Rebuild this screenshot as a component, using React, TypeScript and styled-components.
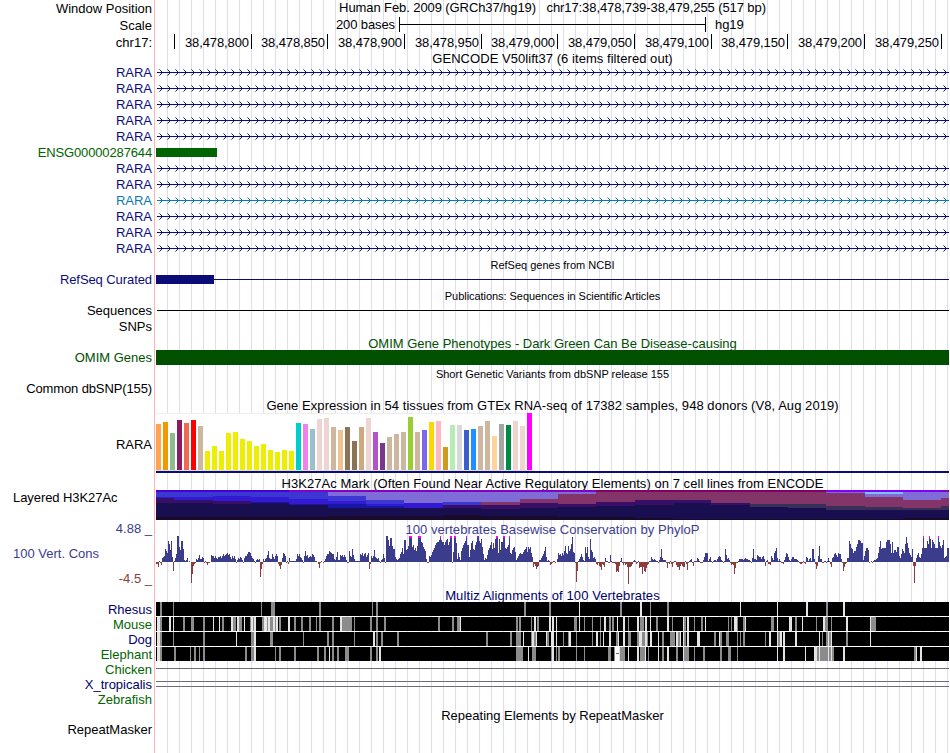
import React from 'react';
import styled, {createGlobalStyle} from 'styled-components';

const GlobalStyle = createGlobalStyle`
  body {
    margin: 0;
    background: #fff;
  }
`;

const Browser = styled.div`
  width: 949px;
  height: 753px;
  overflow: hidden;
  font-family: "Liberation Sans", Arial, Helvetica, sans-serif;
  font-size: 13px;
  color: #000;
  background:
    linear-gradient(#ffb4b4, #ffb4b4) 154px 0 / 1px 100% no-repeat,
    repeating-linear-gradient(90deg, #dcdcff 0 1px, transparent 1px 12px) 167px 0 / 782px 100% no-repeat;
`;

const Row = styled.div<{h: number}>`
  display: flex;
  height: ${p => p.h}px;
  line-height: ${p => p.h}px;
  white-space: pre;
`;

const Label = styled.div<{color?: string; $shift?: number; $spacing?: number}>`
  flex: none;
  width: 152px;
  margin-top: ${p => p.$shift || 0}px;
  margin-right: 4px;
  text-align: right;
  color: ${p => p.color || '#000'};
  letter-spacing: ${p => p.$spacing || 0}px;
`;

const LeftLabel = styled(Label)`
  box-sizing: border-box;
  padding-left: 13px;
  text-align: left;
`;

const Track = styled.div`
  flex: none;
  width: 793px;
  svg {
    display: block;
  }
`;

const Title = styled(Track)<{color?: string; $small?: boolean; $shift?: number; $spacing?: number}>`
  margin-top: ${p => p.$shift || 0}px;
  text-align: center;
  color: ${p => p.color || '#000'};
  font-size: ${p => p.$small ? 11 : 13}px;
  letter-spacing: ${p => p.$spacing || 0}px;
`;

const ScaleTrack = styled(Track)`
  display: flex;
  letter-spacing: -0.1px;
`;

const ScaleText = styled.span<{w?: number}>`
  width: ${p => p.w ? p.w + 'px' : 'auto'};
  margin-top: -1px;
  text-align: right;
`;

const ScaleBar = styled.div`
  display: flex;
  align-items: center;
  box-sizing: border-box;
  width: 307px;
  height: 15px;
  margin: 0 9px 0 4px;
  border: solid #000;
  border-width: 0 1px;
  &::before {
    content: '';
    flex: 1;
    height: 1px;
    background: #000;
  }
`;

const Tick = styled.span<{w: number}>`
  box-sizing: border-box;
  flex: none;
  width: ${p => p.w}px;
  height: 15px;
  padding-right: 2px;
  border-right: 1px solid #000;
  text-align: right;
`;

const Bar = styled.div<{w: number; h: number; top?: number; color: string}>`
  width: ${p => p.w}px;
  height: ${p => p.h}px;
  margin-top: ${p => p.top || 0}px;
  background: ${p => p.color};
`;

const Curated = styled(Track)`
  display: flex;
  align-items: center;
`;

const Expression = styled.div`
  display: flex;
  align-items: flex-end;
  gap: 2px;
  box-sizing: border-box;
  width: 378px;
  height: 58px;
  border-bottom: 1px solid #ddd;
  background: linear-gradient(#eee, #eee) 0 0 / 100% 1px no-repeat #fff;
`;

const ConsLabels = styled.div`
  display: flex;
  flex-direction: column;
  width: 156px;
`;

const Spacer = styled.div<{h: number}>`
  height: ${p => p.h}px;
`;

const NAVY = '#0c0c78';
const GREEN = '#006400';
const BLUE = '#3c3c8c';
const RED = '#8c3c3c';

const Introns = ({color}: {color: string}) => (
  <svg width="793" height="16" shapeRendering="crispEdges">
    <rect x="1" y="8" width="792" height="1" fill={color}/>
    {Array.from({length: 99}, (_, i) => (
      <g key={i} fill={color} transform={`translate(${i * 8 + 3} 0)`}>
        <rect x="0" y="5" width="1" height="1" opacity="0.5"/>
        <rect x="1" y="6" width="1" height="1"/>
        <rect x="2" y="7" width="1" height="1"/>
        <rect x="2" y="9" width="1" height="1"/>
        <rect x="1" y="10" width="1" height="1"/>
        <rect x="0" y="11" width="1" height="1" opacity="0.5"/>
      </g>
    ))}
  </svg>
);

const TAN = '#cdb79e';
const YEL = '#eeee00';
const PINK = '#eed5d2';
const tissues: [string, number][] = [
  ['#ffa54f', 46], ['#ee9a00', 48], ['#8fbc8f', 37], ['#8b1c62', 50], ['#ee6a50', 47], ['#ff0000', 50],
  [TAN, 44], [YEL, 19], [YEL, 24], [YEL, 19], [YEL, 37], [YEL, 38], [YEL, 31], [YEL, 29], [YEL, 24],
  [YEL, 26], [YEL, 20], [YEL, 18], [YEL, 20], [YEL, 19], ['#00cdcd', 47], ['#ee82ee', 46],
  ['#9ac0cd', 41], [PINK, 51], [PINK, 52], [TAN, 43], ['#eec591', 40], ['#8b7355', 43], ['#8b7355', 29],
  ['#cdaa7d', 43], [PINK, 52], ['#b452cd', 38], ['#7a378b', 27], [TAN, 33], [TAN, 36], [TAN, 38],
  ['#9acd32', 53], [TAN, 38], ['#7a67ee', 40], ['#ffd700', 48], ['#ffb6c1', 49], ['#cd9b1d', 23],
  ['#b4eeb4', 45], ['#d9d9d9', 45], ['#3a5fcd', 40], ['#1e90ff', 41], [TAN, 44], [TAN, 49],
  ['#ffd39b', 34], ['#a6a6a6', 46], ['#008b45', 45], [PINK, 49], [PINK, 44], ['#ff00ff', 57],
];

// Overlaid cell line signals: start x, then colour key and bottom edge of each layer
const layerColors: Record<string, string> = {
  t: '#4600d2', u: '#8200c8', m: '#820064', v: '#7f00ff',
  A: '#3c37d2', B: '#3419d2', C: '#1717a5', P: '#380f66', D: '#190e50', E: '#180a28',
  L: '#806cd6', M: '#833468', K: '#39305a', S: '#80c0ff',
};
const acetyl: [number, string][] = [
  [156, 't2 A7 B8 P13 D27 E30'],
  [174, 't2 A7 B10 P13 D27 E30'],
  [213, 't2 A6 B11 P14 D27 E30'],
  [251, 't2 A7 B12 C13 D27 E30'],
  [289, 'u2 A9 B14 C15 D27 E30'],
  [328, 'u2 L6 A11 B14 C18 D26 E30'],
  [366, 'u2 L10 A14 B16 C18 D26 E30'],
  [404, 'u2 L13 B18 D26 E30'],
  [443, 'u2 L12 A15 P18 D25 E30'],
  [481, 'u2 L12 M15 P19 D26 E30'],
  [520, 'u2 L9 M13 P18 D26 E30'],
  [558, 'u2 L4 M14 P17 D27 E30'],
  [596, 'm2 M12 P16 D27 E30'],
  [635, 'm2 M10 P15 D28 E30'],
  [673, 'm2 M10 P13 D29 E30'],
  [711, 'm2 M13 P15 D29 E30'],
  [750, 'm2 M14 K17 D29 E30'],
  [788, 'm2 M14 K18 D29 E30'],
  [826, 'v2 L3 M16 K20 D29 E30'],
  [865, 'v2 S4 L7 M17 K20 D29 E30'],
  [903, 'v2 L10 M18 K20 D28 E30'],
  [941, 'u2 L8 M16 K20 D28 E30'],
];

const Acetylation = () => (
  <svg width="793" height="30" viewBox="156 0 793 30" shapeRendering="crispEdges">
    {acetyl.map(([x, layers], i) => {
      const end = i + 1 < acetyl.length ? acetyl[i + 1][0] : 949;
      let top = 0;
      return layers.split(' ').map(layer => {
        const bottom = Number(layer.slice(1));
        const y = top;
        top = bottom;
        return <rect key={x + layer} x={x} y={y} width={end - x} height={bottom - y} fill={layerColors[layer[0]]}/>;
      });
    })}
  </svg>
);

// One score per pixel, 27 means clipped at the top of the range
const scores: [number, number[]][] = [
  [156, [-2, -2, -5, 1, -1, -3, 4, 5, 6, 13, 11, 9, 21, 18, 12, 21, 5, -9, 1, 4, 8, 26, 26, 15, 12, 21, 21, 13]],
  [184, [2, 1, 2, 4, 0, 1, 0, -21, -12, -4, -2, -1, 3, 2, 4, 7, 3, 3, 5, 4, -1, 1, -1, -3, -1, -1, 0]],
  [211, [7, 6, 6, 4, 6, 4, 3, 5, 5, 6, 4, 6, 8, 6, 7, 8, 9, 7, 8, 5, 3, 6, 4, 6, 3, -1]],
  [237, [2, 4, 3, 5, 4, 2, -1, 4, 6, 6, 8, 10, 10, 9, 6, 4, 3, 1, -1, 2, 3, 2, 3]],
  [260, [-15, -7, -2, 3, 1, 3, 4, 7, 11, 4, 3, 3, 8, 5, 3, 6, 8, 6, -2, -4, -7, -3, 4, 9, 8, 6, -1, 1, -2, 4]],
  [290, [1, 1, 1, 1, 1, 1, 3, 8, 6, 8, 5, 4, 2, -1, 6, 11, 6, 7, 4, 5, 6, 5, 8, 7, 5, 1, 1, 0, -2, -6]],
  [320, [-1, 1, 0, -1, 1, 3, 6, 8, 8, 11, 10, 9, 8, 8, 3, 2, 5, 10, 2, 2, 7, 6, 7, 5, 7, 5, 2, -1, -1]],
  [349, [11, 6, 5, 13, 7, 3, 1, 1, 1, 1, 1, 8, 7, 9, 6, 8, 9, 5, 7, 9, -7, -2, 6, 4, 6, 12, 5, 4, 3, 4, 1, -1]],
  [381, [2, 3, 8, 4, -1, 26, 26, 22, 16, 24, 24, 16, 13, 13, 5, 3, 2, 3, 4, 8, 10, 14, 8, 22, 22, 12, 13, 16]],
  [409, [27, 27, 27, 15, 17, 12, 14, 11, 16, 27, 27, 27, 20, 19, 15, 13, 11, 3, -1, -1]],
  [429, [6, 5, 7, 10, 12, 14, 17, 19, 20, 20, 22, 27, 22, 20, 20, 17, 20, 22, 23, 17, 20, 27, 27]],
  [452, [-1, 10, 27, 27, 19, 3, 9, 5, 2, 11, 14, 17, 19, 21, 27, 17, 17, 5, 12, 19, 21, 13, 12, 17, 20]],
  [477, [27, 26, 21, 19, 23, 15, 8, 2, 4, 3, 7, 12, 14, 17, 20, 13, 19, 14, 23, 27, 27, 9, 23, 12, 20, 20]],
  [503, [27, 27, 14, 13, 15, 17, 27, 9, 8, 12, 14, 15, 10, 2, 4, 6, 8, 9, 8, 8, 10, 12, 13, 15, 10, 15, 13, 15, 9, 5]],
  [533, [-5, -2, -4, -7, -5, -4, 2, 2, 4, 6, 8, 11, 15, 5, 1, 2, 1, -3, -2, -1, 1, 1, -1, 0, 3]],
  [558, [9, 7, 8, 6, 9, 7, 11, 16, 9, 8, 16, 11, 13, 18, 25, 10, 9, -1, -20, -9, 1, 3, 5, 8, 5, 2, 1]],
  [585, [15, 9, 15, 5, 3, 23, 12, 10, 4, 5, 3, -2, -3, -1, -4, -5, -8, -2, -3, -5, 4, 1, 1, -1, -1, 7]],
  [611, [1, -1, -1, -1, -2, -10, -9, -10, -4, 1, 4, -1, -3, -1, -3, -2, -5, -22, -5, -5, -4, -2]],
  [633, [1, 2, 1, -2, -1, 1, -6, -5, -5, -12, -5, -9, -10, -6, -3, -2, 1, 1, 5, 3, 2, 3, 2, 1, 1, -1, 2, 5]],
  [661, [13, 4, 2, 2, 2, -1, -6, -1, -2, 1, -2, -5, -1, 1, 1, -3, -5, -5, -8]],
  [680, [-4, -2, -4, -5, -5, 1, -2, -8, -1, 1, 2, 3, -1, -4, 1, 1, 1, 4, 3, 1, -1, -1, -1, 2, 5, 9, 9, 9, 1, 3, 5]],
  [711, [1, -1, 1, 2, 2, 1, 3, 5, 6, 5, 2, 1, -1, 1, 13, 7, 3, 4, 2, -1, -3, -2, -3, -12, -6, -1, -1]],
  [738, [1, 3, 3, 3, 3, 2, 3, 4, 3, 3, 2, 2, 1, -1, 4, 13, 3, 3, 2, 7, 6, 5, 5, 3, 5, 6, 3, -4]],
  [766, [1, 2, -2, -2, -3, 6, 4, 2, 9, 11, 14, 4, 1, 3, 1, -1, -1, -2, 2, 5, 9, 8, 5, 2, 1, 3, 5, 5, 3, 3]],
  [796, [3, 2, 1, -1, -2, -2, -1, 1, -1, -2, 5, 4, 1, 3, 4, 1, 13, 13, 3, -2, -7, -4, 6, 16, 3, 3, -1, -1]],
  [824, [1, 1, -1, 1, 4, 1, -2, -5, 4, 5, 8, 9, 7, 5, 9, 8, 8, 3, -1, -9, -5, -2, -1, 4, 4]],
  [849, [21, 18, 14, 13, 9, 11, 11, 15, 18, 22, 22, 21, 19, 19, 2, 6, 11, 14, 14, 12, -1, 0, 1, -1]],
  [873, [1, 2, 2, 3, 4, 9, 15, 21, 13, 14, 14, 14, 14, 20, 22, 22, 22, 18, 9, 20, 9, 12, 12, 10, 15, 15]],
  [899, [6, 4, 8, 13, 11, 9, 18, 25, 19, 14, 9, 7, 5, 13, -4, -21, -4, 4, 7, 9, 5, 4, 8, 14]],
  [923, [27, 14, 14, 14, 21, 18, 27, 23, 14, 22, 20, 18, 14, 14, 14, 27, 20, 16, 14, 17, 22, 4, 5, 6, 14, 14]],
];

const Conservation = () => (
  <svg width="793" height="52" viewBox="156 0 793 52" shapeRendering="crispEdges">
    {scores.map(([start, values]) => values.map((v, i) => {
      const h = Math.min(Math.abs(v), 26);
      return (
        <g key={start + i}>
          <rect x={start + i} y={v < 0 ? 26 : 26 - h} width="1" height={h} fill={v < 0 ? RED : BLUE}/>
          {v === 27 && <rect x={start + i} y="0" width="1" height="2" fill="#ff00ff"/>}
        </g>
      );
    }))}
  </svg>
);

// Stripes are x, shade (g grey, w pale) and width
const species: {name: string; color: string; stripes: string}[] = [
  {
    name: 'Rhesus', color: '#000064',
    stripes: '160g2 173g1 261g1 271g4 319g2 372g1 376g2 524g2 549g2 579w1 620g2 640w2 650g1 667g2 740w1 777w1 806w2 826g2 843w2',
  },
  {
    name: 'Mouse', color: GREEN,
    stripes: '157w3 160g2 169w2 173w1 183g2 191g3 203g2 213w1 219w1 222g2 231w2 233g3 237w2 239g3 244w1 250g1 251w2 253g1 254w2 ' +
      '262g2 264w3 267g1 268w2 270g3 273w2 275g1 276w2 279g2 288w2 294g2 301g2 309g2 316g1 319g2 332g2 340w2 342g10 354g1 ' +
      '370g2 376g2 384g2 438g2 452g2 457g3 460w1 516g2 519g2 531g1 534w2 537g2 549w2 552w2 556w1 574g3 579w1 584g1 592g1 ' +
      '600g1 604w2 609g2 612g2 617w1 623w2 628g1 637w2 640g2 642g2 645w2 650w1 656g2 667w2 672g1 683w1 684g2 687w2 694g1 ' +
      '701g2 705w1 728g1 731g1 734w3 737g1 743g2 745w1 771g3 777w1 789w3 795g2 802w1 816g1 823w2 825g3 831g1 846w2 870w1 871g5',
  },
  {
    name: 'Dog', color: '#000064',
    stripes: '157w3 160g2 173g1 203g2 236w1 251g3 254w2 270g3 303g1 327g2 332g2 354g1 373w2 376g2 381g2 397g2 486g2 510g2 ' +
      '516g5 523w1 531g1 532w2 534g2 536w1 546w1 547g2 551w3 556w1 563g1 568g1 569w2 576g1 592g1 596w2 600g1 603w1 609w2 ' +
      '616g2 618w1 623w2 628g1 629g2 637g2 639w3 642g3 645w2 647g1 650w2 658w1 662g2 670g5 676w2 678g2 680w1 683w1 684g2 ' +
      '687w2 697w3 714g2 719w1 720g2 726g3 737g1 740g1 743g2 765g1 769w2 777w1 778g2 780w2 783w2 795w2 819w1 822g1 826g2 ' +
      '828w1 829g2 831w1 846g2 870w1',
  },
  {
    name: 'Elephant', color: GREEN,
    stripes: '157w3 160g2 174g2 190g1 194g2 199g1 203g2 245g2 251g3 254w2 275g1 279g2 294g2 317g2 324g2 329w1 332g2 337g2 ' +
      '345g4 370g2 376g2 379w2 516g7 528w1 532g4 551g1 552w2 556g1 558g2 576g1 584g1 608g3 614g1 615w4 619w1 620g5 628w1 ' +
      '637w2 640g5 645w1 648g1 658w1 662g2 667w2 676g2 683w1 684g5 694g1 703g2 720g2 728g3 737g1 777w1 783w2 805w1 814w3 ' +
      '817g2 819w1 820g8 828w1 829g2 831w1 832g2 843w2 914g2 916w1 920w2',
  },
];

const Alignment = ({stripes}: {stripes: string}) => (
  <svg width="793" height="14" viewBox="156 0 793 14" shapeRendering="crispEdges">
    <rect x="156" y="0" width="793" height="14" fill="#000"/>
    {stripes.split(' ').map(s => {
      const [x, w] = s.split(/[gw]/);
      return <rect key={s} x={x} y="0" width={w} height="14" fill={s.includes('g') ? '#8c8c8c' : '#e4e4e4'}/>;
    })}
    {/* unaligned gap in the elephant sequence */}
    {stripes.includes('615w4') && (
      <>
        <rect x="615" y="0" width="4" height="14" fill="#fff"/>
        <rect x="616" y="6" width="3" height="1" fill="#6e6e6e"/>
      </>
    )}
  </svg>
);

const genes = ['RARA', 'RARA', 'RARA', 'RARA', 'RARA', 'ENSG00000287644', 'RARA', 'RARA', 'RARA', 'RARA', 'RARA', 'RARA'];
const ticks: [number, string][] = [
  [19, ''], [77, '38,478,800'], [76, '38,478,850'], [77, '38,478,900'], [77, '38,478,950'], [76, '38,479,000'],
  [77, '38,479,050'], [77, '38,479,100'], [76, '38,479,150'], [77, '38,479,200'], [77, '38,479,250'],
];

function App() {
  return (
    <Browser>
      <GlobalStyle/>
      <Row h={17}>
        <Label>Window Position</Label>
        <Title $shift={-1} $spacing={-0.09}>Human Feb. 2009 (GRCh37/hg19)   chr17:38,478,739-38,479,255 (517 bp)</Title>
      </Row>
      <Row h={17}>
        <Label>Scale</Label>
        <ScaleTrack>
          <ScaleText w={239}>200 bases</ScaleText>
          <ScaleBar/>
          <ScaleText>hg19</ScaleText>
        </ScaleTrack>
      </Row>
      <Row h={17}>
        <Label>chr17:</Label>
        <ScaleTrack>
          {ticks.map(([w, text]) => <Tick key={text} w={w}>{text}</Tick>)}
        </ScaleTrack>
      </Row>
      <Row h={13}>
        <Label/>
        <Title $shift={1} $spacing={0.05}>GENCODE V50lift37 (6 items filtered out)</Title>
      </Row>
      {genes.map((gene, i) => {
        const color = i === 5 ? GREEN : i === 8 ? '#0c78b4' : NAVY;
        return (
          <Row h={16} key={i}>
            <Label color={color} $shift={1} $spacing={i === 5 ? -0.14 : 0}>{gene}</Label>
            <Track>
              {i === 5 ? <Bar w={61} h={9} top={4} color={color}/> : <Introns color={color}/>}
            </Track>
          </Row>
        );
      })}
      <Row h={18}>
        <Label/>
        <Title $small>RefSeq genes from NCBI</Title>
      </Row>
      <Row h={11}>
        <Label color={NAVY} $spacing={-0.08}>RefSeq Curated</Label>
        <Curated>
          <Bar w={58} h={9} color={NAVY}/>
          <Bar w={735} h={1} color={NAVY}/>
        </Curated>
      </Row>
      <Row h={22}>
        <Label/>
        <Title $small $spacing={-0.05}>Publications: Sequences in Scientific Articles</Title>
      </Row>
      <Row h={7}>
        <Label>Sequences</Label>
        <Curated>
          <Bar w={1} h={1} color="transparent"/>
          <Bar w={792} h={1} color="#000"/>
        </Curated>
      </Row>
      <Row h={24}>
        <Label $shift={1}>SNPs</Label>
      </Row>
      <Row h={12}>
        <Label/>
        <Title color="#005000">OMIM Gene Phenotypes - Dark Green Can Be Disease-causing</Title>
      </Row>
      <Row h={15}>
        <Label color="#005000">OMIM Genes</Label>
        <Bar w={793} h={15} color="#005000"/>
      </Row>
      <Row h={18}>
        <Label/>
        <Title $small>Short Genetic Variants from dbSNP release 155</Title>
      </Row>
      <Row h={11}>
        <Label $spacing={-0.12}>Common dbSNP(155)</Label>
      </Row>
      <Row h={19}>
        <Label/>
        <Title $shift={2} $spacing={0.055}>Gene Expression in 54 tissues from GTEx RNA-seq of 17382 samples, 948 donors (V8, Aug 2019)</Title>
      </Row>
      <Row h={62}>
        <Label $shift={1}>RARA</Label>
        <Track>
          <Expression>
            {tissues.map(([color, h], i) => <Bar key={i} w={5} h={h} color={color}/>)}
          </Expression>
          <Bar w={793} h={2} color={NAVY}/>
        </Track>
      </Row>
      <Row h={15}>
        <Label/>
        <Title $shift={1} $spacing={0.05}>H3K27Ac Mark (Often Found Near Active Regulatory Elements) on 7 cell lines from ENCODE</Title>
      </Row>
      <Row h={30}>
        <LeftLabel $spacing={-0.07}><Row h={15}>Layered H3K27Ac</Row></LeftLabel>
        <Track><Acetylation/></Track>
      </Row>
      <Spacer h={1}/>
      <Row h={15}>
        <Label color={BLUE}>4.88 _</Label>
        <Title color={BLUE} $shift={1} $spacing={0.04}>100 vertebrates Basewise Conservation by PhyloP</Title>
      </Row>
      <Row h={52}>
        <ConsLabels>
          <Spacer h={10}/>
          <Row h={15}><LeftLabel color={BLUE}>100 Vert. Cons</LeftLabel></Row>
          <Spacer h={10}/>
          <Row h={15}><Label color={RED}>-4.5 _</Label></Row>
        </ConsLabels>
        <Track><Conservation/></Track>
      </Row>
      <Row h={14}>
        <Label/>
        <Title color="#000064" $shift={1} $spacing={0.1}>Multiz Alignments of 100 Vertebrates</Title>
      </Row>
      {species.map(s => (
        <Row h={15} key={s.name}>
          <Label color={s.color}>{s.name}</Label>
          <Track><Alignment stripes={s.stripes}/></Track>
        </Row>
      ))}
      <Row h={15}>
        <Label color={GREEN}>Chicken</Label>
        <Bar w={793} h={1} top={6} color="#6e6e6e"/>
      </Row>
      <Row h={15}>
        <Label color="#000064">X_tropicalis</Label>
        <Track>
          <Bar w={793} h={1} top={4} color="#6e6e6e"/>
          <Bar w={793} h={1} top={4} color="#6e6e6e"/>
        </Track>
      </Row>
      <Row h={15}>
        <Label color={GREEN}>Zebrafish</Label>
      </Row>
      <Row h={17}>
        <Label/>
        <Title>Repeating Elements by RepeatMasker</Title>
      </Row>
      <Row h={11}>
        <Label>RepeatMasker</Label>
      </Row>
    </Browser>
  );
}

export default App;
